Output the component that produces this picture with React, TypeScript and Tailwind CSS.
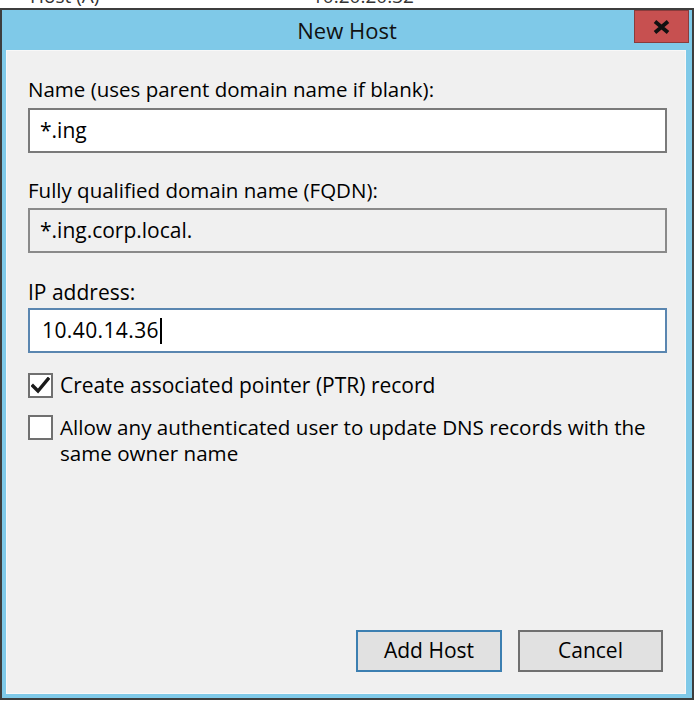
import { useState } from "react";

const font = { fontFamily: '"Open Sans", "Noto Sans", sans-serif' };

function Checkbox({ checked }: { checked: boolean }) {
  return (
    <div className="w-[25px] h-[25px] shrink-0 border-2 border-[#707070] bg-white flex items-center justify-center">
      {checked && (
        <svg width="19" height="17" viewBox="0 0 19 17">
          <path d="M2 9 L7 14 L17 2" fill="none" stroke="#1a1a1a" strokeWidth="3.4" strokeLinecap="square" />
        </svg>
      )}
    </div>
  );
}

export default function App() {
  const [ptr, setPtr] = useState(true);
  const [allow, setAllow] = useState(false);

  return (
    <div className="w-[698px] h-[702px] bg-white overflow-hidden text-black" style={font}>
      {/* list behind the dialog, cut off */}
      <div className="h-[8px] overflow-hidden relative">
        <div className="absolute top-[-14px] left-[30px] text-[19px] leading-[20px] text-[#333]">Host (A)</div>
        <div className="absolute top-[-14px] left-[312px] text-[19px] leading-[20px] text-[#333]">10.20.20.32</div>
      </div>

      <div className="w-[694px] h-[692px] border-2 border-[#3d3d3d] bg-[#7fc9e8] flex flex-col">
        {/* title bar */}
        <div className="relative h-[40px] shrink-0 flex items-center justify-center">
          <span className="text-[22px] leading-[26px] text-[#111] -mt-[1px]">New Host</span>
          <div className="absolute top-0 right-[3px] w-[55px] h-[33px] bg-[#c75050] border border-[#8a3b3b] flex items-center justify-center">
            <svg width="17" height="14" viewBox="0 0 17 14">
              <path d="M2 1.5 L15 12.5 M15 1.5 L2 12.5" stroke="#111" strokeWidth="3.8" />
            </svg>
          </div>
        </div>

        {/* body */}
        <div className="ml-[4px] mr-[6px] mb-[4px] flex-1 bg-[#f0f0f0] border border-[#f8f8f8] pl-[21px] pr-[18px] pt-[26px] flex flex-col text-[21px]">
          <div className="leading-[24px] h-[24px] text-[20.5px]">Name (uses parent domain name if blank):</div>
          <div className="mt-[7px] h-[45px] border-2 border-[#7a7a7a] bg-white flex items-center pl-[10px]">*.ing</div>

          <div className="mt-[25px] leading-[24px] h-[24px] text-[20.5px]">Fully qualified domain name (FQDN):</div>
          <div className="mt-[6px] h-[45px] border-2 border-[#8a8a8a] bg-[#f0f0f0] flex items-center pl-[10px]">*.ing.corp.local.</div>

          <div className="mt-[27px] leading-[24px] h-[24px]">IP address:</div>
          <div className="mt-[4px] h-[45px] border-2 border-[#5a86b0] bg-white flex items-center pl-[12px]">
            <span className="tracking-[0.4px]">10.40.14.36</span>
            <span className="w-[2px] h-[26px] bg-black ml-[1px]" />
          </div>

          <label className="mt-[19px] flex items-center gap-[7px] cursor-default" onClick={() => setPtr(!ptr)}>
            <Checkbox checked={ptr} />
            <span className="leading-[26px]">Create associated pointer (PTR) record</span>
          </label>

          <label className="mt-[17px] flex items-start gap-[7px] cursor-default" onClick={() => setAllow(!allow)}>
            <Checkbox checked={allow} />
            <span className="leading-[26px] -mt-[1px] text-[20.6px]">
              Allow any authenticated user to update DNS records with the
              <br />
              same owner name
            </span>
          </label>

          <div className="flex-1" />

          <div className="flex justify-end gap-[16px] pr-[4px] mb-[21px]">
            <button className="w-[146px] h-[42px] border-2 border-[#3c7fb1] bg-[#e1e1e1]">Add Host</button>
            <button className="w-[145px] h-[42px] border-2 border-[#707070] bg-[#e1e1e1]">Cancel</button>
          </div>
        </div>
      </div>
    </div>
  );
}
